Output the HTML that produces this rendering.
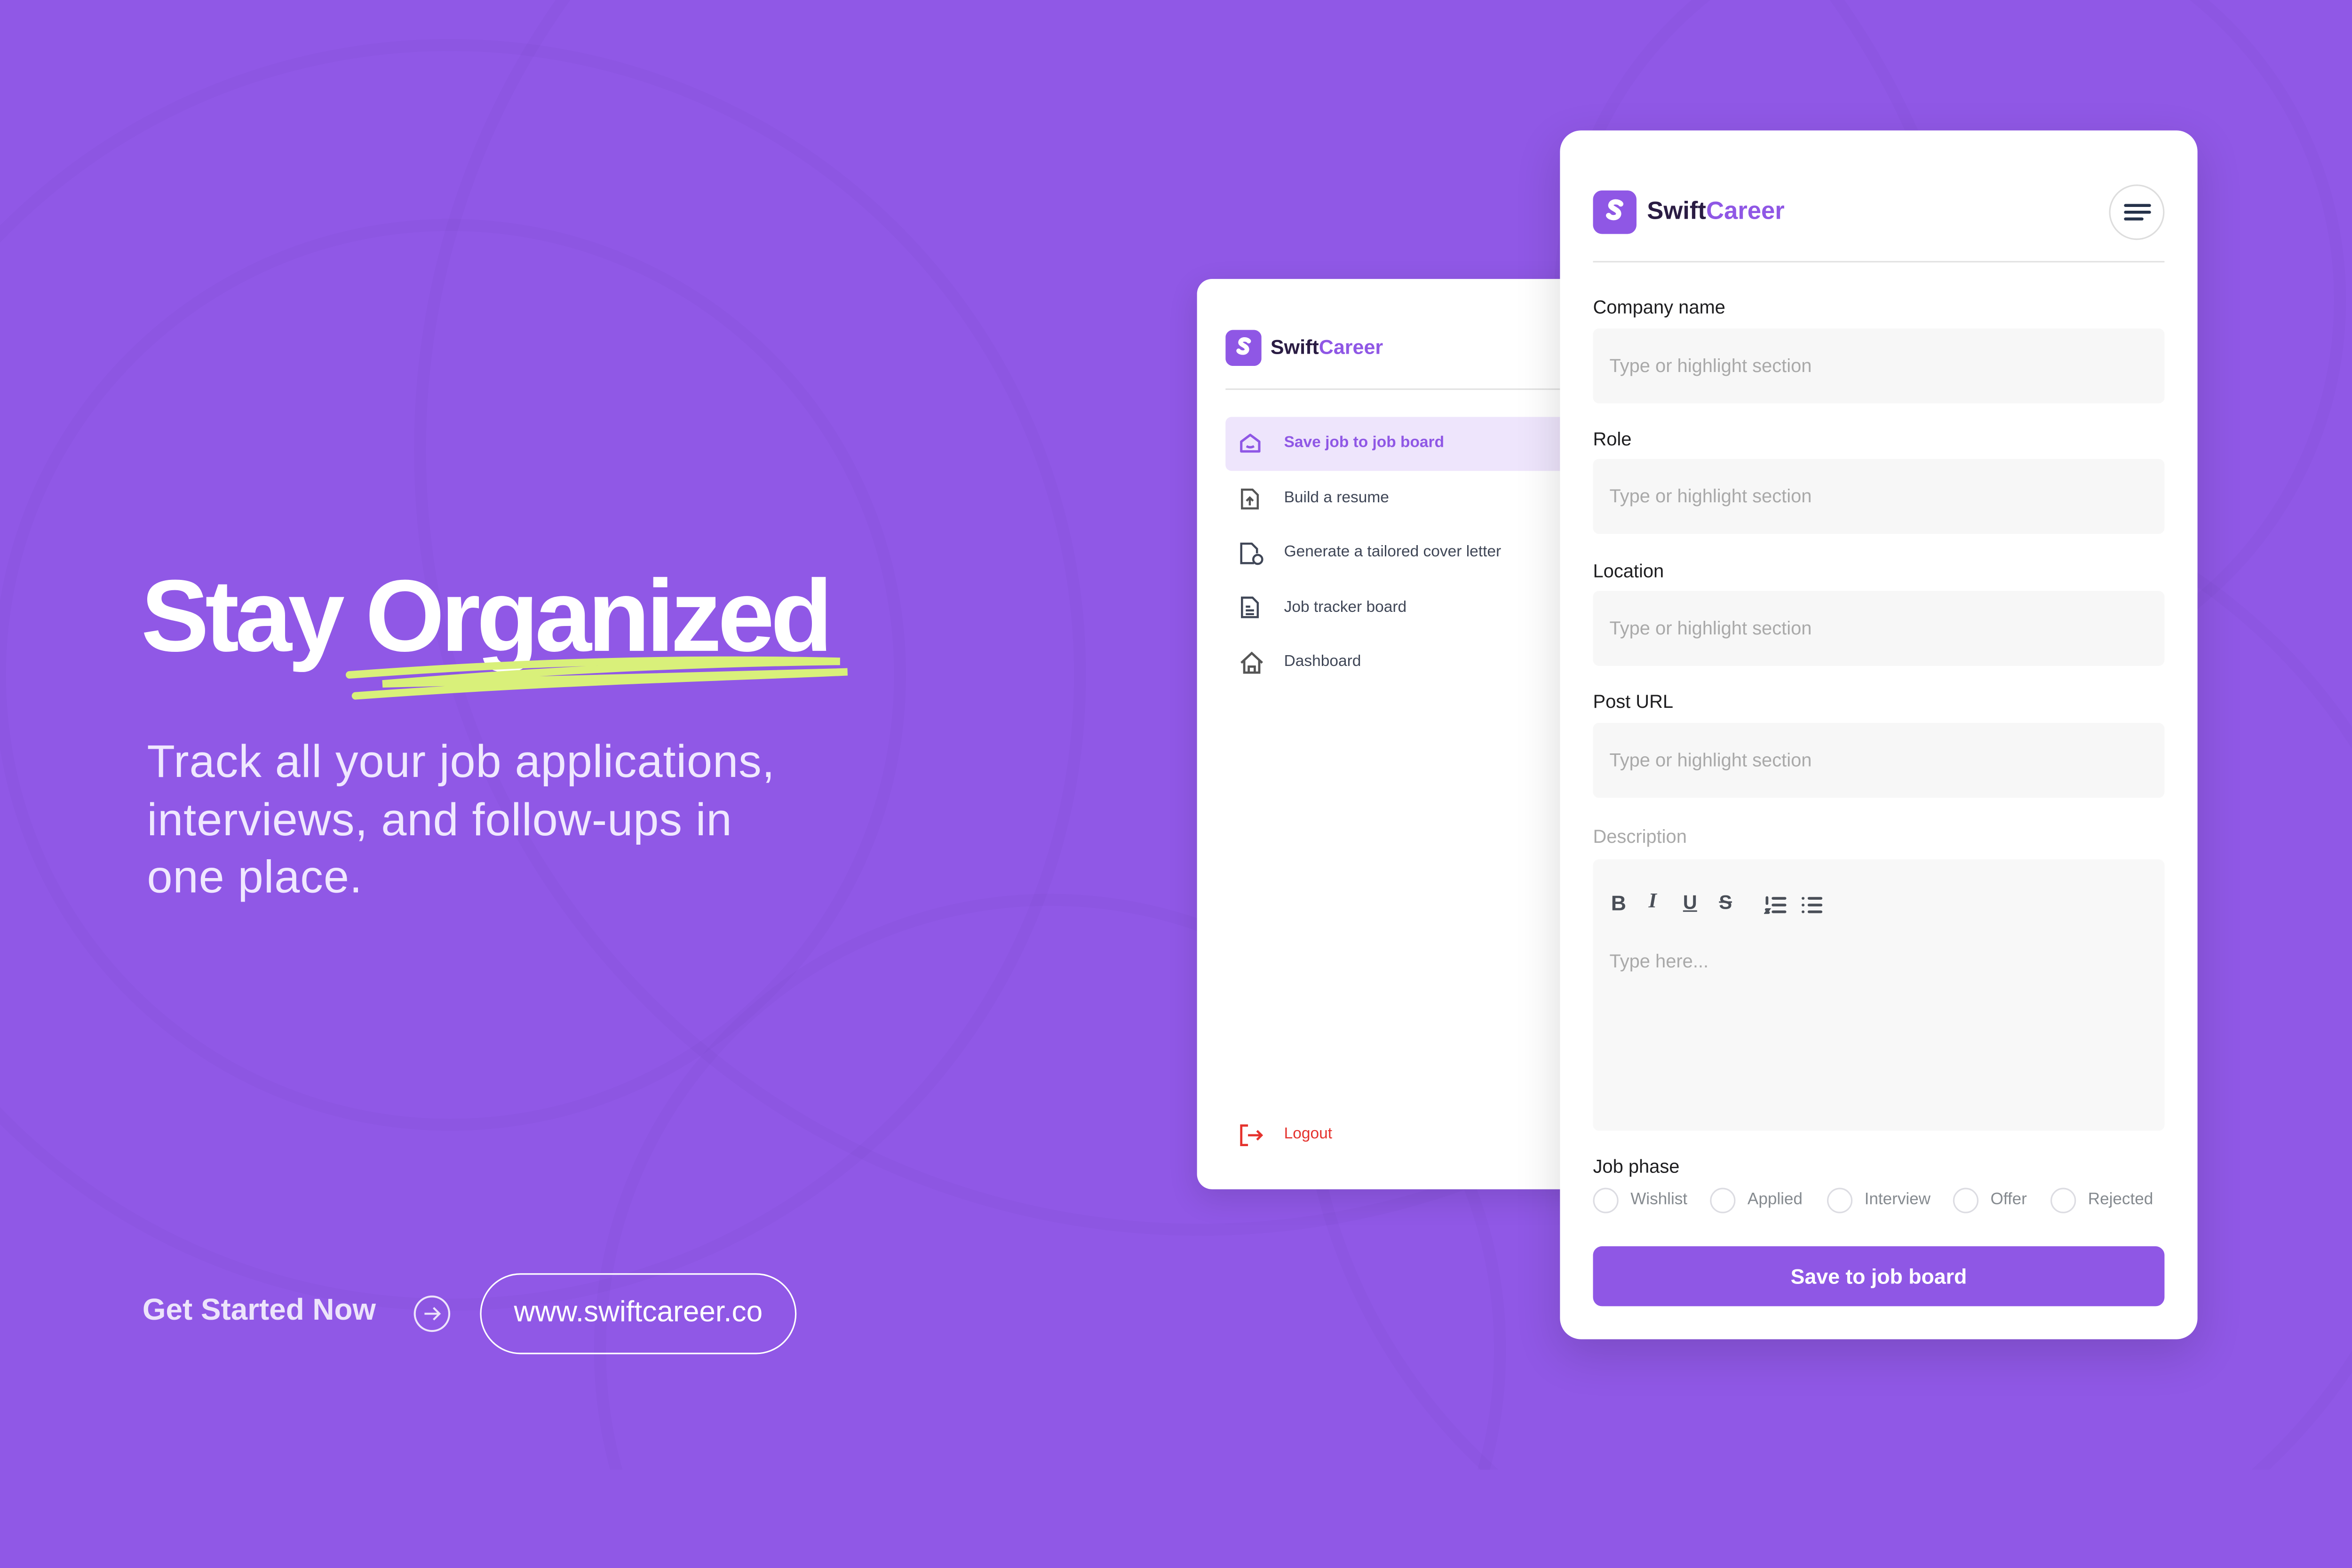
<!DOCTYPE html>
<html><head><meta charset="utf-8">
<style>
*{margin:0;padding:0;box-sizing:border-box}
html,body{width:100%;height:3334px;overflow:hidden;background:#9058E6}
#s{position:absolute;left:0;top:0;width:1568px;height:980px;transform:scale(3.40179);transform-origin:0 0;font-family:"Liberation Sans",sans-serif;background:#9058E6;overflow:hidden}
.a{position:absolute}
.t{white-space:nowrap}
.card{position:absolute;background:#fff}
.lbl{position:absolute;left:22px;font-size:12.5px;color:#1d1d1f}
.inp{position:absolute;left:22px;width:381px;height:50px;background:#F7F7F7;border-radius:4px;font-size:12.5px;color:#a9a9a9;padding:18px 0 0 11px}
.mi{position:absolute;left:58px;font-size:10.5px;color:#3f4656}
.ic{position:absolute;left:28px}
.rad{position:absolute;top:705px;width:17px;height:17px;border:1.5px solid #dcdce2;border-radius:50%}
.rl{position:absolute;top:707px;font-size:11px;color:#858a8f}
</style></head><body><div id="s">
<svg class="a" style="left:0;top:0" width="1568" height="980" fill="none" stroke="rgba(60,20,120,0.03)" stroke-width="8">
<circle cx="300" cy="450" r="300"/><circle cx="300" cy="450" r="420"/><circle cx="800" cy="300" r="520"/><circle cx="1250" cy="700" r="380"/><circle cx="1300" cy="200" r="260"/><circle cx="700" cy="900" r="300"/>
</svg>
<div class="a t" style="left:94px;top:372px;font-size:68px;font-weight:700;color:#fff;letter-spacing:-2.6px">Stay Organized</div>
<svg class="a" style="left:225px;top:436px" width="350" height="32" fill="none" stroke="#D9F07A" stroke-width="5" stroke-linecap="round">
<path d="M8 14 C90 8 200 2 335 5 C250 6 150 10 30 20 C130 18 250 14 340 12 C250 16 150 18 12 28"/>
</svg>
<div class="a" style="left:98px;top:489px;font-size:30.5px;line-height:38.5px;color:#F0E8FF;font-weight:300;letter-spacing:0.3px">Track all your job applications,<br>interviews, and follow-ups in<br>one place.</div>
<div class="a t" style="left:95px;top:863px;font-size:20px;font-weight:700;color:#EDE4FB">Get Started Now</div>
<svg class="a" style="left:275px;top:863px" width="26" height="26" fill="none" stroke="#EDE4FB" stroke-width="1.3"><circle cx="13" cy="13" r="11.5"/><path d="M8 13h10M14 9l4 4-4 4"/></svg>
<div class="a t" style="left:320px;top:849px;width:211px;height:54px;border:1.5px solid #fff;border-radius:27px;font-size:19.5px;color:#fff;text-align:center;line-height:51px">www.swiftcareer.co</div>

<div class="card" style="left:798px;top:186px;width:260px;height:607px;border-radius:10px;box-shadow:0 6px 20px rgba(0,0,0,0.12)">
<svg class="a" style="left:19px;top:34px" width="24" height="24"><rect width="24" height="24" rx="5" fill="#8F57E5"/><path d="M15.5 7.5c-1-1.5-5-1.8-5.5.6-.4 2 4.5 2.3 4.3 5-.3 2.6-4.5 2.5-5.6.8" fill="none" stroke="#fff" stroke-width="3" stroke-linecap="round"/></svg>
<div class="a t" style="left:49px;top:38px;font-size:13.5px;font-weight:700;color:#2a1c43">Swift<span style="color:#8F57E5">Career</span></div>
<div class="a" style="left:19px;top:73px;width:230px;height:1px;background:#e3e3e3"></div>
<div class="a" style="left:19px;top:92px;width:230px;height:36px;background:#EEE5FC;border-radius:4px"></div>
<svg class="ic" style="top:102px" width="15" height="15" fill="none" stroke="#8F57E5" stroke-width="1.6"><path d="M1.5 6.5L7.5 2l6 4.5v6.5h-12z" stroke-linejoin="round"/><path d="M5 9.5q2.5 1.5 5 0"/></svg>
<div class="mi t" style="top:103px;color:#8F57E5;font-weight:700">Save job to job board</div>
<svg class="ic" style="top:139px" width="15" height="15" fill="none" stroke="#555" stroke-width="1.4"><path d="M2 1.5h7l3.5 3.5v9h-10.5z"/><path d="M7.2 12V7M5 9l2.2-2.2L9.4 9"/></svg>
<div class="mi t" style="top:140px">Build a resume</div>
<svg class="ic" style="top:175px" width="17" height="16" fill="none" stroke="#3f4656" stroke-width="1.4"><path d="M10 14.5H1.5v-13h7l3.5 3.5v3"/><circle cx="12.5" cy="12" r="3"/></svg>
<div class="mi t" style="top:176px">Generate a tailored cover letter</div>
<svg class="ic" style="top:211px" width="15" height="16" fill="none" stroke="#3f4656" stroke-width="1.4"><path d="M2 1.5h7l3.5 3.5v9.5h-10.5z"/><path d="M4.5 7.5h3M4.5 10h5.5M4.5 12.5h5.5"/></svg>
<div class="mi t" style="top:213px">Job tracker board</div>
<svg class="ic" style="top:248px" width="17" height="16" fill="none" stroke="#555" stroke-width="1.5"><path d="M1.5 8L8.5 1.5 15.5 8M3.5 6.5v8h10v-8M6.5 14.5v-4h4v4"/></svg>
<div class="mi t" style="top:249px">Dashboard</div>
<svg class="ic" style="top:563px" width="17" height="16" fill="none" stroke="#E5322D" stroke-width="1.5"><path d="M6 1.5H1.5v13H6M6 8h9M12 5l3 3-3 3"/></svg>
<div class="mi t" style="top:564px;color:#E5322D">Logout</div>
</div>

<div class="card" style="left:1040px;top:87px;width:425px;height:806px;border-radius:14px;box-shadow:0 10px 30px rgba(0,0,0,0.15)">
<svg class="a" style="left:22px;top:40px" width="29" height="29"><rect width="29" height="29" rx="6" fill="#8F57E5"/><path d="M18.5 9c-1.2-1.8-6-2.2-6.6.7-.5 2.4 5.4 2.8 5.2 6-.4 3.1-5.4 3-6.7 1" fill="none" stroke="#fff" stroke-width="3.5" stroke-linecap="round"/></svg>
<div class="a t" style="left:58px;top:45px;font-size:16.5px;font-weight:700;color:#2a1c43">Swift<span style="color:#8F57E5">Career</span></div>
<div class="a" style="left:366px;top:36px;width:37px;height:37px;border:1.3px solid #ddd;border-radius:50%"></div>
<svg class="a" style="left:375px;top:48px" width="20" height="14" stroke="#25324a" stroke-width="2" stroke-linecap="round"><path d="M2 2h16M2 6.5h16M2 11h11"/></svg>
<div class="a" style="left:22px;top:87px;width:381px;height:1px;background:#e3e3e3"></div>
<div class="lbl t" style="top:111px">Company name</div>
<div class="inp t" style="top:132px">Type or highlight section</div>
<div class="lbl t" style="top:199px">Role</div>
<div class="inp t" style="top:219px">Type or highlight section</div>
<div class="lbl t" style="top:287px">Location</div>
<div class="inp t" style="top:307px">Type or highlight section</div>
<div class="lbl t" style="top:374px">Post URL</div>
<div class="inp t" style="top:395px">Type or highlight section</div>
<div class="lbl t" style="top:464px;color:#a9a9a9">Description</div>
<div class="a" style="left:22px;top:486px;width:381px;height:181px;background:#F8F8F8;border-radius:4px"></div>
<div class="a t" style="left:34px;top:507px;font-size:14px;font-weight:700;color:#4a4f58">B</div>
<div class="a t" style="left:59px;top:507px;font-size:14px;font-style:italic;font-weight:700;color:#4a4f58;font-family:'Liberation Serif',serif">I</div>
<div class="a t" style="left:82px;top:507px;font-size:13px;font-weight:700;color:#4a4f58;text-decoration:underline">U</div>
<div class="a t" style="left:106px;top:507px;font-size:13px;font-weight:700;color:#4a4f58;text-decoration:line-through">S</div>
<svg class="a" style="left:136px;top:510px" width="44" height="13" stroke="#4a4f58" stroke-width="1.8" stroke-linecap="round"><path d="M2 1.5v4M1.5 9.5h1.5l-1.5 2h1.5M6 2h8M6 6.5h8M6 11h8M26 2h.1M26 6.5h.1M26 11h.1M30 2h8M30 6.5h8M30 11h8"/></svg>
<div class="a t" style="left:33px;top:547px;font-size:12.5px;color:#a9a9a9">Type here...</div>
<div class="lbl t" style="top:684px">Job phase</div>
<div class="rad" style="left:22px"></div><div class="rl t" style="left:47px">Wishlist</div>
<div class="rad" style="left:100px"></div><div class="rl t" style="left:125px">Applied</div>
<div class="rad" style="left:178px"></div><div class="rl t" style="left:203px">Interview</div>
<div class="rad" style="left:262px"></div><div class="rl t" style="left:287px">Offer</div>
<div class="rad" style="left:327px"></div><div class="rl t" style="left:352px">Rejected</div>
<div class="a t" style="left:22px;top:744px;width:381px;height:40px;background:#8F57E5;border-radius:6px;color:#fff;font-size:14px;font-weight:700;text-align:center;line-height:40px">Save to job board</div>
</div>
</div>
<script>
(function(){var w=window.innerWidth||5334,k=w/1568;document.getElementById('s').style.transform='scale('+k+')';var h=Math.round(980*k)+'px';document.documentElement.style.height=h;document.body.style.height=h;})();
</script>
</body></html>
